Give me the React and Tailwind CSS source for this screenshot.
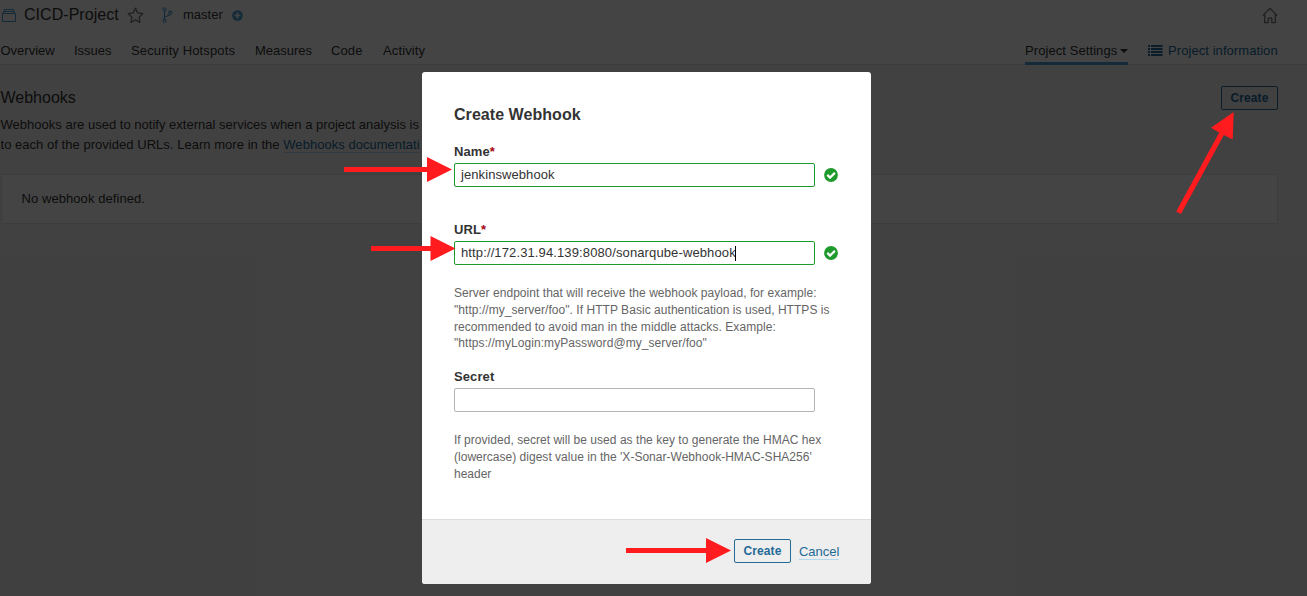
import React from "react";

const TABS = [
  { label: "Overview", cls: "w-[54px] pl-[0.5px]" },
  { label: "Issues", cls: "w-[37px]" },
  { label: "Security Hotspots", cls: "w-[104px] tracking-[0.13px]" },
  { label: "Measures", cls: "w-[56px]" },
  { label: "Code", cls: "w-[32px] tracking-[0.1px]" },
  { label: "Activity", cls: "w-[43px] tracking-[0.12px]" },
];

function ProjectIcon() {
  return (
    <svg className="h-[16px] w-[17px] shrink-0" viewBox="0 0 17 16" fill="none" stroke="#4b9fd5">
      <path d="M2.500 6.500h13v8h-13zM3.500 6V4.500h11V6M4.500 4.500V2.500h9v2" />
    </svg>
  );
}

function StarIcon() {
  return (
    <svg className="h-[17px] w-[17px]" viewBox="0 0 17 17" fill="none" stroke="#777" strokeWidth="1.3" strokeLinejoin="round">
      <path d="M8.5 1.2l2.2 4.7 5.2.7-3.800 3.600.9 5.200-4.500-2.500L4 15.400l.9-5.200L1.100 6.600l5.200-.7z" />
    </svg>
  );
}

function BranchIcon() {
  return (
    <svg className="h-[16px] w-[12px]" viewBox="0 0 12 16" fill="none" stroke="#4b9fd5" strokeWidth="1.1">
      <circle cx="2.500" cy="2.300" r="1.500" />
      <circle cx="2.500" cy="13.700" r="1.500" />
      <circle cx="8.300" cy="5.600" r="1.500" />
      <path d="M2.500 4v8M2.500 10.500c0-2.200 5.800-.8 5.800-3.400" />
    </svg>
  );
}

function PlusIcon() {
  return (
    <svg className="h-[11px] w-[11px]" viewBox="0 0 11 11">
      <circle cx="5.5" cy="5.5" r="5.3" fill="#4b9fd5" />
      <path d="M5.5 2.6v5.8M2.6 5.5h5.8" stroke="#fff" strokeWidth="1.7" />
    </svg>
  );
}

function HomeIcon() {
  return (
    <svg className="h-[17px] w-[16px]" viewBox="0 0 16 17" fill="none" stroke="#777" strokeWidth="1.3" strokeLinejoin="round">
      <path d="M.8 8.6L8 1.3l7.2 7.3M2.7 7v8.7h3.5v-4.5h3.6v4.5h3.5V7" />
    </svg>
  );
}

function ListIcon() {
  return (
    <svg className="h-[12px] w-[15px]" viewBox="0 0 15 12" fill="#236a97">
      <path d="M0 0h2v2H0zM3 0h11.500v2H3zM0 3h2v2H0zM3 3h11.500v2H3zM0 6h2v2H0zM3 6h11.500v2H3zM0 9h2v2H0zM3 9h11.500v2H3z" />
    </svg>
  );
}

function CheckIcon() {
  return (
    <svg className="ml-[9px] h-[14px] w-[14px]" viewBox="0 0 14 14">
      <circle cx="7" cy="7" r="6.9" fill="#1f9a2d" />
      <path d="M3.300 6.900l2.700 2.700 4.900-4.700" fill="none" stroke="#fff" strokeWidth="2.200" />
    </svg>
  );
}

function Header() {
  return (
    <header className="h-[65px] border-b border-[#e0e0e0] bg-white">
      <div className="flex h-[30px] items-center pr-[29px]">
        <ProjectIcon />
        <span className="ml-[7px] w-[96px] whitespace-nowrap text-[16px] leading-[20px] tracking-[0.04px]">CICD-Project</span>
        <span className="ml-[7px]"><StarIcon /></span>
        <span className="ml-[18px]"><BranchIcon /></span>
        <span className="ml-[9px] w-[41px] whitespace-nowrap">master</span>
        <span className="ml-[8px]"><PlusIcon /></span>
        <span className="ml-auto"><HomeIcon /></span>
      </div>
      <nav className="flex h-[35px] pr-[29px] leading-[41px]">
        <div className="flex gap-5">
          {TABS.map((t) => (
            <a key={t.label} className={"whitespace-nowrap " + t.cls}>{t.label}</a>
          ))}
        </div>
        <div className="ml-auto flex gap-5">
          <a className="flex h-[35px] w-[103px] items-center whitespace-nowrap border-b-3 border-[#4b9fd5]">
            <span className="mt-[8px] w-[92px] tracking-[0.08px]">Project Settings</span>
            <svg className="ml-[3px] mt-[9px] h-[4px] w-[8px]" viewBox="0 0 8 4"><path d="M0 0h8L4 4z" fill="#333" /></svg>
          </a>
          <a className="flex items-center whitespace-nowrap text-[#236a97]">
            <span className="mt-[6px] flex"><ListIcon /></span>
            <span className="ml-[5px] mt-[6px] w-[110px] tracking-[0.07px]">Project information</span>
          </a>
        </div>
      </nav>
    </header>
  );
}

function CreateButton() {
  return (
    <button className="h-[24px] w-[57px] rounded-[2px] border border-[#236a97] text-center text-[12px] font-bold leading-[21px] tracking-[0.1px] text-[#236a97]">
      Create
    </button>
  );
}

function Field({ label, required, value, valueClass, caret }) {
  return (
    <div>
      <div className="h-[20px] font-bold leading-[18px] tracking-[0.1px]">
        {label}
        {required && <span className="text-[#a4030f]">*</span>}
      </div>
      <div className="flex items-center">
        <div className={"flex h-[24px] w-[361px] items-center rounded-[2px] border px-[6px] " + (required ? "border-[#1f9a2d]" : "border-[#b4b4b4]")}>
          <span className={"whitespace-nowrap " + (valueClass || "")}>{value}</span>
          {caret && <span className="-ml-px h-[15px] w-px bg-black" />}
        </div>
        {required && <CheckIcon />}
      </div>
    </div>
  );
}

function Dialog() {
  return (
    <section className="absolute left-[422px] top-[72px] flex h-[512px] w-[449px] flex-col overflow-hidden rounded-[3px] bg-white">
      <div className="flex-1 px-8 pt-[33px]">
        <h2 className="h-[38px] whitespace-nowrap text-[16px] font-bold leading-[20px] tracking-[0.05px]">Create Webhook</h2>
        <Field label="Name" required value="jenkinswebhook" valueClass="tracking-[0.08px]" />
        <div className="h-[34px]" />
        <Field label="URL" required value="http://172.31.94.139:8080/sonarqube-webhook" valueClass="tracking-[0.12px]" caret />
        <p className="mt-[20px] whitespace-nowrap text-[12px] leading-[16.8px] text-[#656565]">
          <span className="block tracking-[0.045px]">Server endpoint that will receive the webhook payload, for example:</span>
          <span className="block tracking-[0.045px]">"http://my_server/foo". If HTTP Basic authentication is used, HTTPS is</span>
          <span className="block tracking-[0.065px]">recommended to avoid man in the middle attacks. Example:</span>
          <span className="block tracking-[0.065px]">"https://myLogin:myPassword@my_server/foo"</span>
        </p>
        <div className="h-[16px]" />
        <Field label="Secret" />
        <p className="mt-[20px] whitespace-nowrap text-[12px] leading-[16.8px] text-[#656565]">
          <span className="block tracking-[0.035px]">If provided, secret will be used as the key to generate the HMAC hex</span>
          <span className="block tracking-[0.02px]">(lowercase) digest value in the 'X-Sonar-Webhook-HMAC-SHA256'</span>
          <span className="block">header</span>
        </p>
      </div>
      <footer className="flex h-[65px] items-center justify-end border-t border-[#ddd] bg-[#eee] pr-8 pb-[2px]">
        <CreateButton />
        <a className="ml-2 mt-[2px] w-[40px] whitespace-nowrap border-b border-[#b3d9ee] leading-[14px] tracking-[-0.03px] text-[#236a97]">Cancel</a>
      </footer>
    </section>
  );
}

function Arrows() {
  return (
    <svg className="absolute inset-0 h-[596px] w-[1307px]" viewBox="0 0 1307 596" fill="#ff1b1e">
      <path d="M344 167h83v-10l25 12.5-25 12.5v-10h-83z" />
      <path d="M371 246h59.500v-10l25 12.500-25 12.500v-10h-59.500z" />
      <path d="M626 548h80v-10l25 12.500-25 12.500v-10h-80z" />
      <path d="M1233.700 112l-1 27.500-8.800-4.500-43 79-4.700-2.600 43-79-8.300-4.600z" />
    </svg>
  );
}

export default function App() {
  return (
    <div className="relative h-[596px] w-[1307px] overflow-hidden bg-[#f3f3f3] font-['Liberation_Sans',Arial,sans-serif] text-[13px] text-[#333]">
      <Header />
      <main className="pr-[29px] pt-[21px]">
        <div className="flex justify-between">
          <div className="w-[422px] overflow-hidden pl-[0.5px]">
            <h1 className="whitespace-nowrap pt-px text-[16px] leading-[22px]">Webhooks</h1>
            <p className="mt-[6px] whitespace-nowrap leading-[20px]">
              <span className="block tracking-[0.015px]">Webhooks are used to notify external services when a project analysis is</span>
              <span className="block tracking-[0.035px]">
                to each of the provided URLs. Learn more in the{" "}
                <a className="border-b border-[#b3d9ee] text-[#236a97]">Webhooks documentati</a>
              </span>
            </p>
          </div>
          <CreateButton />
        </div>
        <div className="ml-px mt-[19px] flex h-[50px] items-center border border-[#e6e6e6] bg-white pl-[19.5px] tracking-[0.07px]">No webhook defined.</div>
      </main>
      <div className="absolute inset-0 bg-black/[73.5%]" />
      <Dialog />
      <Arrows />
    </div>
  );
}
